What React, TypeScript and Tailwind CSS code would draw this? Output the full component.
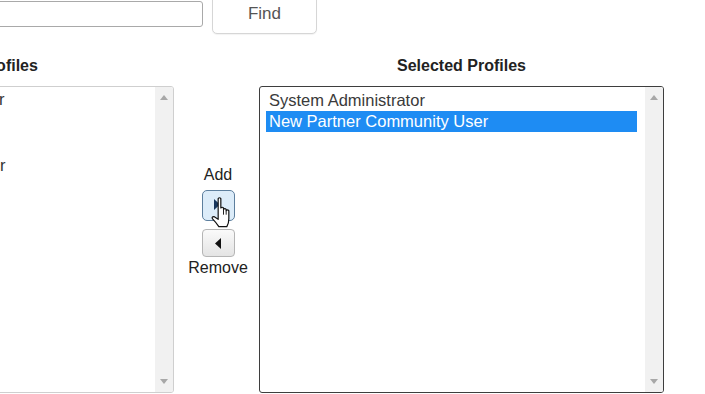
import React from "react";

const leftItems = [
  "Partner Community Login User",
  "Analytics Cloud Security User",
  "Authenticated Website",
  "Silver Partner Community User",
  "Chatter Free User",
  "Contract Manager",
  "Custom: Marketing Profile",
  "Custom: Sales Profile",
  "Custom: Support Profile",
  "Chatter External User",
  "Cross Org Data Proxy User",
  "Customer Portal Login",
  "Gold Partner User",
];

function UpArrow() {
  return (
    <svg width="8" height="5" viewBox="0 0 8 5">
      <path d="M0 5 L4 0 L8 5 Z" fill="#a8a8a8" />
    </svg>
  );
}
function DownArrow() {
  return (
    <svg width="8" height="5" viewBox="0 0 8 5">
      <path d="M0 0 L4 5 L8 0 Z" fill="#a8a8a8" />
    </svg>
  );
}

function Scrollbar() {
  return (
    <div className="w-[18px] bg-[#f1f1f1] flex flex-col items-center justify-between pt-[8px] pb-[8px] shrink-0">
      <UpArrow />
      <DownArrow />
    </div>
  );
}

function HandCursor() {
  return (
    <svg width="23" height="32" viewBox="0 0 17 24" className="absolute left-[7px] top-[5px]">
      <path
        d="M6 2 Q7 0.6 8 2 L8 9 Q9 7.9 10 9 L10 10 Q11 8.9 12 10 L12 11 Q13 9.9 14 11 L14 17 Q14 20.5 12.5 23 L6.5 23 Q4.5 20 1.8 17.2 Q0.8 15.6 2.8 15.4 L6 17.5 Z"
        fill="#ffffff"
        stroke="#111"
        strokeWidth="0.9"
        strokeLinejoin="round"
      />
      <path d="M10 10 L10 14 M12 11 L12 14" stroke="#111" strokeWidth="0.7" />
    </svg>
  );
}

export default function App() {
  return (
    <div
      className="w-[705px] h-[394px] overflow-hidden bg-white text-[#333]"
      style={{ fontFamily: '"Liberation Sans", Arial, sans-serif' }}
    >
      {/* search row */}
      <div className="flex items-center -mt-[6px] h-[40px]">
        <div className="-ml-[97px] w-[300px] h-[26px] border border-[#a9a9a9] rounded-[3px] bg-white shrink-0" />
        <button className="ml-[9px] w-[105px] h-[40px] border border-[#d6d6d6] rounded-[5px] bg-white text-[17px] text-[#555] shrink-0 shadow-[0_1px_1px_rgba(0,0,0,0.05)]">
          Find
        </button>
      </div>

      {/* headers */}
      <div className="flex mt-[22px] h-[20px] leading-[20px] text-[16px] font-bold text-[#222]">
        <div className="-ml-[231px] w-[405px] text-center shrink-0">Available Profiles</div>
        <div className="w-[85px] shrink-0" />
        <div className="w-[405px] text-center shrink-0">Selected Profiles</div>
      </div>

      {/* lists */}
      <div className="flex mt-[10px]">
        {/* available */}
        <div className="-ml-[231px] w-[405px] h-[307px] border border-[#cfcfcf] rounded-[3px] flex shrink-0 overflow-hidden">
          <div className="flex-1 pt-[1px] pl-[5px] overflow-hidden">
            {leftItems.map((t) => (
              <div key={t} className="h-[22px] leading-[22px] pl-[3px] text-[16.5px] whitespace-nowrap">
                {t}
              </div>
            ))}
          </div>
          <Scrollbar />
        </div>

        {/* add/remove */}
        <div className="w-[85px] shrink-0 flex flex-col items-center pt-[79px] pl-[3px]">
          <div className="h-[20px] leading-[20px] text-[16px] text-[#222]">Add</div>
          <div className="mt-[5px] relative w-[33px] h-[31px] rounded-[5px] border-[1.5px] border-[#5d7f9e] bg-[#dcecf9] flex items-center justify-center">
            <svg width="6" height="11" viewBox="0 0 6 11" className="-ml-[2px] -mt-[2px]">
              <path d="M0 0 L6 5.5 L0 11 Z" fill="#17365d" />
            </svg>
            <HandCursor />
          </div>
          <div className="mt-[8px] w-[33px] h-[28px] rounded-[4px] border border-[#b5b5b5] bg-gradient-to-b from-[#fafafa] to-[#e4e4e4] flex items-center justify-center">
            <svg width="6" height="11" viewBox="0 0 6 11">
              <path d="M6 0 L0 5.5 L6 11 Z" fill="#111" />
            </svg>
          </div>
          <div className="h-[20px] leading-[20px] text-[16px] text-[#222] mt-[1px]">Remove</div>
        </div>

        {/* selected */}
        <div className="w-[405px] h-[307px] border-[1.5px] border-[#3e3e3e] rounded-[3px] flex shrink-0 overflow-hidden">
          <div className="flex-1 pt-[2px] pl-[6px] pr-[8px]">
            <div className="h-[22px] leading-[22px] pl-[3px] text-[16.5px] text-[#3a3a3a] whitespace-nowrap">
              System Administrator
            </div>
            <div className="h-[21px] leading-[21px] pl-[3px] text-[16.5px] text-white bg-[#1e8cf3] whitespace-nowrap">
              New Partner Community User
            </div>
          </div>
          <Scrollbar />
        </div>
      </div>
    </div>
  );
}
